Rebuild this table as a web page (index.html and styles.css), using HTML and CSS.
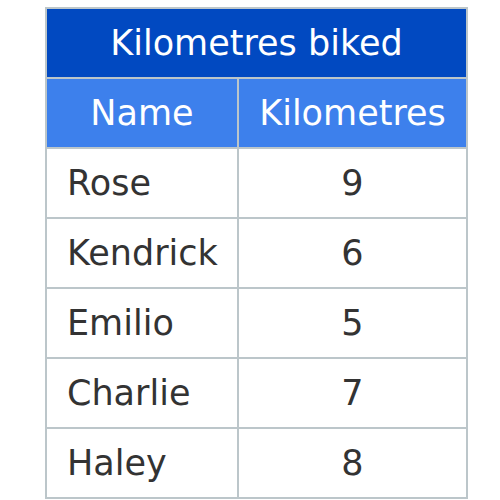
FILE: index.html
```html
<!DOCTYPE html>
<html>
<head>
<meta charset="utf-8">
<link rel="stylesheet" href="styles.css">
</head>
<body>
<table class="data">
  <colgroup>
    <col class="col-name">
    <col class="col-km">
  </colgroup>
  <thead>
    <tr><th class="title" colspan="2">Kilometres biked</th></tr>
    <tr><th class="head">Name</th><th class="head">Kilometres</th></tr>
  </thead>
  <tbody>
    <tr><td class="name">Rose</td><td class="num">9</td></tr>
    <tr><td class="name">Kendrick</td><td class="num">6</td></tr>
    <tr><td class="name">Emilio</td><td class="num">5</td></tr>
    <tr><td class="name">Charlie</td><td class="num">7</td></tr>
    <tr><td class="name">Haley</td><td class="num">8</td></tr>
  </tbody>
</table>
</body>
</html>
```
FILE: styles.css
```css
html, body {
  margin: 0;
  padding: 0;
  background: #ffffff;
}
body {
  padding: 7px 0 0 45px;
  font-family: "DejaVu Sans", Verdana, sans-serif;
}
.data {
  border-collapse: collapse;
  width: 423px;
  table-layout: fixed;
}
.col-name {
  width: 192px;
}
.data th, .data td {
  border: 2px solid #bcc6ca;
  height: 68px;
  padding: 0;
  font-size: 35px;
  font-weight: normal;
}
.data th.title {
  background: #0149c1;
  color: #ffffff;
  text-align: center;
}
.data th.head {
  background: #3d80ec;
  color: #ffffff;
  text-align: center;
}
.data td {
  color: #333333;
}
.data td.name {
  padding-left: 20px;
  text-align: left;
}
.data td.num {
  text-align: center;
}
```
